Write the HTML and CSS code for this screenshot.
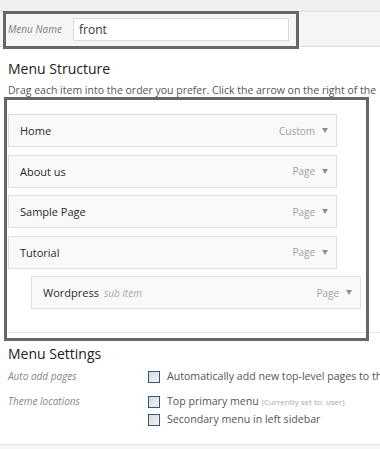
FILE: index.html
```html
<!DOCTYPE html>
<html>
<head>
<meta charset="utf-8">
<link rel="stylesheet" href="styles.css">
</head>
<body>
<div class="page">
  <div class="strip"></div>
  <div class="header">
    <span class="name-label">Menu Name</span>
    <div class="name-input">front</div>
  </div>
  <h2 class="heading h-structure">Menu Structure</h2>
  <p class="desc">Drag each item into the order you prefer. Click the arrow on the right of the</p>
  <ul class="items">
    <li class="item"><span class="title">Home</span><span class="type">Custom</span><span class="arrow"></span></li>
    <li class="item"><span class="title">About us</span><span class="type">Page</span><span class="arrow"></span></li>
    <li class="item"><span class="title">Sample Page</span><span class="type">Page</span><span class="arrow"></span></li>
    <li class="item"><span class="title">Tutorial</span><span class="type">Page</span><span class="arrow"></span></li>
    <li class="item sub"><span class="title">Wordpress</span><span class="subnote">sub item</span><span class="type">Page</span><span class="arrow"></span></li>
  </ul>
  <div class="divider"></div>
  <h2 class="heading h-settings">Menu Settings</h2>
  <div class="settings">
    <div class="s-label">Auto add pages</div>
    <div class="s-opts">
      <div class="opt"><span class="cb"></span><span>Automatically add new top-level pages to this menu</span></div>
    </div>
    <div class="s-label l2">Theme locations</div>
    <div class="s-opts o2">
      <div class="opt"><span class="cb"></span><span>Top primary menu <span class="note">(Currently set to: user)</span></span></div>
      <div class="opt"><span class="cb"></span><span>Secondary menu in left sidebar</span></div>
    </div>
  </div>
  <div class="footer"></div>
  <div class="hl hl-name"></div>
  <div class="hl hl-structure"></div>
</div>
</body>
</html>
```
FILE: styles.css
```css
html, body {
  margin: 0;
  padding: 0;
  background: #fff;
}
body {
  width: 380px;
  height: 449px;
  overflow: hidden;
  font-family: "Open Sans", "DejaVu Sans", sans-serif;
  color: #333;
}
.page {
  position: relative;
  width: 380px;
  height: 449px;
  overflow: hidden;
  white-space: nowrap;
}
.strip {
  height: 11px;
  background: #efefef;
}
.header {
  height: 34px;
  background: #f5f5f5;
  border-top: 1px solid #dedede;
  border-bottom: 1px solid #dedede;
  display: flex;
  align-items: center;
  padding-left: 8px;
}
.name-label {
  width: 65px;
  font-size: 10px;
  font-style: italic;
  color: #808080;
}
.name-input {
  box-sizing: border-box;
  width: 216px;
  height: 23px;
  background: #fff;
  border: 1px solid #dcdcdc;
  font-size: 12px;
  line-height: 21px;
  padding-left: 5px;
  color: #333;
}
.heading {
  margin: 0;
  padding-left: 8px;
  font-size: 14px;
  line-height: 18px;
  font-weight: 400;
  color: #222;
}
.h-structure {
  margin-top: 13px;
}
.desc {
  margin: 5px 0 0 0;
  padding-left: 8px;
  font-size: 10.5px;
  line-height: 14px;
  color: #555;
}
.items {
  list-style: none;
  margin: 17px 0 0 0;
  padding: 0 0 0 8px;
  display: flex;
  flex-direction: column;
  gap: 7.5px;
}
.item {
  box-sizing: border-box;
  width: 329px;
  height: 33px;
  background: #f9f9f9;
  border: 1px solid #dfdfdf;
  display: flex;
  align-items: center;
  padding: 0 8px 0 11px;
  font-size: 11px;
}
.item.sub {
  margin-left: 23px;
  width: 330px;
}
.title {
  color: #2a2a2a;
}
.subnote {
  margin-left: 5px;
  font-style: italic;
  color: #aaa;
  font-size: 10px;
}
.type {
  margin-left: auto;
  color: #a0a0a0;
  font-size: 10px;
}
.arrow {
  margin-left: 7px;
  width: 0;
  height: 0;
  border-left: 3.5px solid transparent;
  border-right: 3.5px solid transparent;
  border-top: 5px solid #8c8c96;
}
.divider {
  margin-top: 23px;
  margin-left: 8px;
  height: 1px;
  background: #e5e5e5;
}
.h-settings {
  margin-top: 12px;
}
.settings {
  display: grid;
  grid-template-columns: 140px 1fr;
  padding-left: 8px;
  margin-top: 7px;
  font-size: 10.6px;
  color: #555;
}
.s-label {
  font-style: italic;
  font-size: 10px;
  color: #888;
  line-height: 13px;
}
.s-label.l2 {
  margin-top: 12px;
}
.s-opts.o2 {
  margin-top: 12px;
  display: flex;
  flex-direction: column;
  gap: 5px;
}
.opt {
  display: flex;
  align-items: center;
  height: 13px;
  line-height: 13px;
}
.cb {
  box-sizing: border-box;
  width: 12px;
  height: 12px;
  border: 1px solid #33587d;
  background: linear-gradient(135deg, #dadada, #f4f4f4);
  margin-right: 7px;
  flex: none;
}
.note {
  font-size: 8px;
  color: #aaa;
}
.footer {
  position: absolute;
  left: 0;
  right: 0;
  top: 444px;
  height: 5px;
  background: #f5f5f5;
  border-top: 1px solid #e2e2e2;
}
.hl {
  position: absolute;
  border: 3px solid #666;
  box-sizing: border-box;
}
.hl-name {
  left: 3px;
  top: 11px;
  width: 296px;
  height: 38px;
}
.hl-structure {
  left: 4px;
  top: 97px;
  width: 365px;
  height: 244px;
}
```
